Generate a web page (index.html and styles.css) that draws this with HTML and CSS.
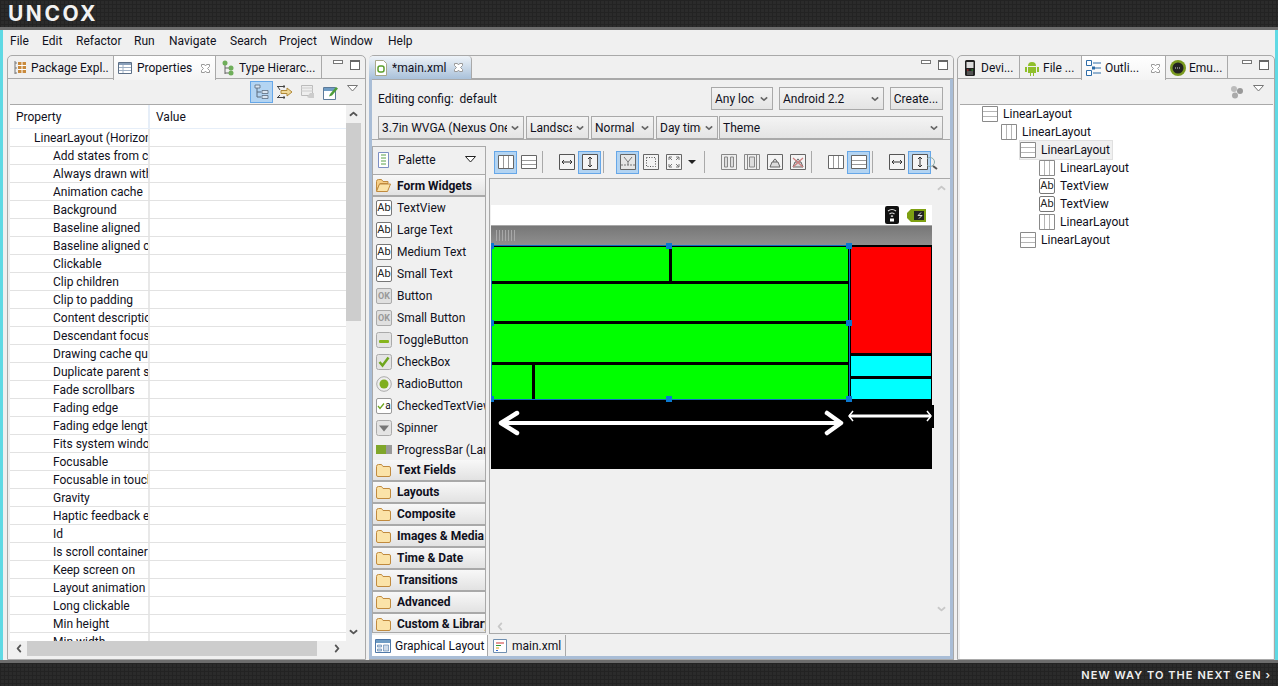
FILE: index.html
```html
<!DOCTYPE html>
<html lang="en">
  <head>
    <meta charset="UTF-8" />
    <title>Eclipse - main.xml</title>
    <link rel="stylesheet" href="styles.css">
  </head>
  <body>
    <svg class="defs" width="0" height="0">
      <symbol id="chev" viewBox="0 0 10 6"><path d="M1 1l4 3.5L9 1" fill="none" stroke="currentColor" stroke-width="2"/></symbol>
      <symbol id="chevup" viewBox="0 0 10 6"><path d="M1 5l4-3.5L9 5" fill="none" stroke="currentColor" stroke-width="2"/></symbol>
      <symbol id="chevl" viewBox="0 0 6 10"><path d="M5 1L1.5 5 5 9" fill="none" stroke="currentColor" stroke-width="2"/></symbol>
      <symbol id="chevr" viewBox="0 0 6 10"><path d="M1 1l3.5 4L1 9" fill="none" stroke="currentColor" stroke-width="2"/></symbol>
      <symbol id="close" viewBox="0 0 11 11"><path d="M1.5 1.5l3 0 1 1.5 1-1.5 3 0 0 2-2 2 2 2 0 2-3 0-1-1.5-1 1.5-3 0 0-2 2-2-2-2z" fill="#fff" stroke="#9a9a9a"/></symbol>
      <symbol id="vert" viewBox="0 0 16 14"><path d="M.5.5h15v13H.5z" fill="#fff" stroke="#666"/><path d="M5.5 1v12M10.5 1v12" stroke="#999"/></symbol>
      <symbol id="horz" viewBox="0 0 16 14"><path d="M.5.5h15v13H.5z" fill="#fff" stroke="#666"/><path d="M1 5.5h14M1 9.5h14" stroke="#999"/></symbol>
      <symbol id="tvert" viewBox="0 0 16 16"><path d="M.5.5h15v15H.5z" fill="#fff" stroke="#8a8a8a"/><path d="M5.5 1v14M10.5 1v14" stroke="#b5b5b5"/></symbol>
      <symbol id="thorz" viewBox="0 0 16 16"><path d="M.5.5h15v15H.5z" fill="#fff" stroke="#8a8a8a"/><path d="M1 5.5h14M1 10.5h14" stroke="#b5b5b5"/></symbol>
      <symbol id="fitw" viewBox="0 0 16 16"><path d="M.5.5h15v15H.5z" fill="#f4f4f4" stroke="#555"/><path d="M3 8h10M5 6L3 8l2 2M11 6l2 2-2 2" fill="none" stroke="#333"/></symbol>
      <symbol id="fith" viewBox="0 0 16 16"><path d="M.5.5h15v15H.5z" fill="#f4f4f4" stroke="#555"/><path d="M8 3v10M6 5l2-2 2 2M6 11l2 2 2-2" fill="none" stroke="#333"/></symbol>
      <symbol id="folder" viewBox="0 0 15 13"><path d="M.5 2.500q0-2 2-2h3l1.500 2h6q1.500 0 1.500 1.500v7q0 1.500-1.500 1.500h-11q-1.500 0-1.500-1.500z" fill="#fbe3a8" stroke="#c08a3e"/></symbol>
    </svg>

    <div class="topbar"><span class="logo">UNCOX</span></div>

    <div class="workbench">
      <nav class="menubar">
        <span class="m-file">File</span>
        <span class="m-edit">Edit</span>
        <span class="m-refactor">Refactor</span>
        <span class="m-run">Run</span>
        <span class="m-navigate">Navigate</span>
        <span class="m-search">Search</span>
        <span class="m-project">Project</span>
        <span class="m-window">Window</span>
        <span>Help</span>
      </nav>

      <div class="panels">
        <!-- left: properties -->
        <section class="panel panel-left">
          <div class="tabbar">
            <div class="tab tab-package">
              <svg class="ico" viewBox="0 0 16 16"><path d="M3 1v13M3 3h2M3 8h2M3 13h2" stroke="#777" fill="none"/><path d="M6 2h8v11H6z" fill="#c98a3c"/><path d="M6 5.500h8M6 9.500h8M10 2v11" stroke="#fff"/></svg>
              <span class="tab-text">Package Expl...</span>
            </div>
            <div class="tab tab-active tab-props">
              <svg class="ico" viewBox="0 0 16 16"><path d="M.5 2.500h13v11H.5z" fill="#fff" stroke="#5c6f87"/><path d="M1 3h12v2H1z" fill="#8aa0ba"/><path d="M1 7.500h12M1 10.500h12M5 5v8" stroke="#9fb0c4"/></svg>
              <span class="tab-text">Properties</span>
              <svg class="close" viewBox="0 0 11 11"><use href="#close"/></svg>
            </div>
            <div class="tab tab-type">
              <svg class="ico" viewBox="0 0 16 16"><path d="M5 3v11M5 8h5M5 13h5" stroke="#666" fill="none"/><circle cx="5" cy="3" r="2.500" fill="#6fae5a"/><circle cx="11" cy="8" r="2.500" fill="#6fae5a"/><circle cx="11" cy="13" r="2.500" fill="#6fae5a"/></svg>
              <span class="tab-text">Type Hierarc...</span>
            </div>
            <div class="view-btns"><span class="vmin"></span><span class="vmax"></span></div>
          </div>
          <div class="viewbar">
            <span class="tool tool-on">
              <svg viewBox="0 0 16 16" width="16" height="16"><path d="M3 3v10h4M3 8h4" fill="none" stroke="#5a6b7c"/><path d="M1 1h5v3H1zM8 6.500h6v3H8zM8 11.500h6v3H8z" fill="#dbe6f2" stroke="#5a6b7c" stroke-width=".8"/></svg>
            </span>
            <span class="tool">
              <svg viewBox="0 0 16 16" width="16" height="16"><path d="M0 2.500h8M0 13.500h8M7 1v3M7 12v3M3 6l-2-3M3 11l-2 2" stroke="#444" fill="none"/><path d="M4 6.500h6V4l5 4-5 4V9.500H4z" fill="#f0d999" stroke="#b0893a"/></svg>
            </span>
            <span class="tool">
              <svg viewBox="0 0 16 16" width="16" height="16"><path d="M1.500 1.500h11v10h-11z" fill="#eee" stroke="#bbb"/><path d="M1 4h12M1 7h12" stroke="#ccc"/><path d="M7 13l3-4h4v5H9z" fill="#ccc"/></svg>
            </span>
            <span class="tool">
              <svg viewBox="0 0 16 16" width="16" height="16"><path d="M.5 3.500h12v12H.5z" fill="#fff" stroke="#5c7a99"/><path d="M1 4h11v3H1z" fill="#6f9cc4"/><path d="M7 10l6-7 2 1.500-6 7-3 1z" fill="#4e9d3a"/></svg>
            </span>
            <svg class="view-menu" viewBox="0 0 11 7" width="11" height="7"><path d="M.5.500h10L5.500 6z" fill="#fff" stroke="#777"/></svg>
          </div>
          <div class="proptable">
            <div class="prop-body">
              <div class="prop-head"><div class="cell-k">Property</div><div class="cell-v">Value</div></div>
              <div class="prop-row prop-group"><div class="cell-k">LinearLayout (Horizontal)</div><div class="cell-v"></div></div>
              <div class="prop-row"><div class="cell-k">Add states from children</div><div class="cell-v"></div></div>
              <div class="prop-row"><div class="cell-k">Always drawn with cache</div><div class="cell-v"></div></div>
              <div class="prop-row"><div class="cell-k">Animation cache</div><div class="cell-v"></div></div>
              <div class="prop-row"><div class="cell-k">Background</div><div class="cell-v"></div></div>
              <div class="prop-row"><div class="cell-k">Baseline aligned</div><div class="cell-v"></div></div>
              <div class="prop-row"><div class="cell-k">Baseline aligned child</div><div class="cell-v"></div></div>
              <div class="prop-row"><div class="cell-k">Clickable</div><div class="cell-v"></div></div>
              <div class="prop-row"><div class="cell-k">Clip children</div><div class="cell-v"></div></div>
              <div class="prop-row"><div class="cell-k">Clip to padding</div><div class="cell-v"></div></div>
              <div class="prop-row"><div class="cell-k">Content description</div><div class="cell-v"></div></div>
              <div class="prop-row"><div class="cell-k">Descendant focusability</div><div class="cell-v"></div></div>
              <div class="prop-row"><div class="cell-k">Drawing cache quality</div><div class="cell-v"></div></div>
              <div class="prop-row"><div class="cell-k">Duplicate parent state</div><div class="cell-v"></div></div>
              <div class="prop-row"><div class="cell-k">Fade scrollbars</div><div class="cell-v"></div></div>
              <div class="prop-row"><div class="cell-k">Fading edge</div><div class="cell-v"></div></div>
              <div class="prop-row"><div class="cell-k">Fading edge length</div><div class="cell-v"></div></div>
              <div class="prop-row"><div class="cell-k">Fits system windows</div><div class="cell-v"></div></div>
              <div class="prop-row"><div class="cell-k">Focusable</div><div class="cell-v"></div></div>
              <div class="prop-row"><div class="cell-k">Focusable in touch mode</div><div class="cell-v"></div></div>
              <div class="prop-row"><div class="cell-k">Gravity</div><div class="cell-v"></div></div>
              <div class="prop-row"><div class="cell-k">Haptic feedback enabled</div><div class="cell-v"></div></div>
              <div class="prop-row"><div class="cell-k">Id</div><div class="cell-v"></div></div>
              <div class="prop-row"><div class="cell-k">Is scroll container</div><div class="cell-v"></div></div>
              <div class="prop-row"><div class="cell-k">Keep screen on</div><div class="cell-v"></div></div>
              <div class="prop-row"><div class="cell-k">Layout animation</div><div class="cell-v"></div></div>
              <div class="prop-row"><div class="cell-k">Long clickable</div><div class="cell-v"></div></div>
              <div class="prop-row"><div class="cell-k">Min height</div><div class="cell-v"></div></div>
              <div class="prop-row"><div class="cell-k">Min width</div><div class="cell-v"></div></div>
            </div>
            <div class="vscroll">
              <svg class="sb-chev" viewBox="0 0 10 6"><use href="#chevup"/></svg>
              <div class="vthumb"></div>
              <svg class="sb-chev sb-end" viewBox="0 0 10 6"><use href="#chev"/></svg>
            </div>
          </div>
          <div class="hscroll">
            <svg class="sb-chev-h" viewBox="0 0 6 10"><use href="#chevl"/></svg>
            <div class="hthumb"></div>
            <svg class="sb-chev-h" viewBox="0 0 6 10"><use href="#chevr"/></svg>
          </div>
        </section>

        <!-- center: layout editor -->
        <section class="panel panel-center">
          <div class="tabbar tabbar-editor">
            <div class="tab tab-editor">
              <svg class="ico" viewBox="0 0 16 16"><path d="M2.500.5h8l3 3v12h-11z" fill="#fff" stroke="#a8a88a"/><rect x="5" y="6" width="6" height="6" rx="2" fill="none" stroke="#5a9e2a" stroke-width="1.500"/></svg>
              <span class="tab-text">*main.xml</span>
              <svg class="close" viewBox="0 0 11 11"><use href="#close"/></svg>
            </div>
            <div class="view-btns"><span class="vmin"></span><span class="vmax"></span></div>
          </div>
          <div class="editor">
            <div class="config">
              <div class="config-row">
                <span class="config-label">Editing config:&nbsp; default</span>
                <div class="combo w-62">Any loc<svg class="combo-chev" viewBox="0 0 10 6"><use href="#chev"/></svg></div>
                <div class="combo w-105">Android 2.2<svg class="combo-chev" viewBox="0 0 10 6"><use href="#chev"/></svg></div>
                <div class="combo combo-btn w-53">Create...</div>
              </div>
              <div class="config-row config-row2">
                <div class="combo w-146"><span class="combo-text">3.7in WVGA (Nexus One)</span><svg class="combo-chev" viewBox="0 0 10 6"><use href="#chev"/></svg></div>
                <div class="combo w-63"><span class="combo-text">Landscape</span><svg class="combo-chev" viewBox="0 0 10 6"><use href="#chev"/></svg></div>
                <div class="combo w-63">Normal<svg class="combo-chev" viewBox="0 0 10 6"><use href="#chev"/></svg></div>
                <div class="combo w-62"><span class="combo-text">Day time</span><svg class="combo-chev" viewBox="0 0 10 6"><use href="#chev"/></svg></div>
                <div class="combo w-theme">Theme<svg class="combo-chev" viewBox="0 0 10 6"><use href="#chev"/></svg></div>
              </div>
            </div>

            <div class="design">
              <aside class="palette">
                <div class="palette-head">
                  <svg class="ico" viewBox="0 0 16 16"><path d="M2.500.5h10v15h-10z" fill="#fff" stroke="#7d8fc4"/><path d="M5 3h5M5 6h5M5 9h5M5 12h5" stroke="#5aa04a"/></svg>
                  <span>Palette</span>
                  <svg class="palette-menu" viewBox="0 0 11 7" width="11" height="7"><path d="M.5.500h10L5.500 6z" fill="#fff" stroke="#222"/></svg>
                </div>
                <div class="cat cat-open"><svg class="folder" viewBox="0 0 15 13"><path d="M.5 2.500q0-2 2-2h3l1.500 2h5v2H4L.5 12z" fill="#f6cf87" stroke="#c08a3e"/><path d="M3.500 5h11l-3 7.500H.5z" fill="#fbe3a8" stroke="#c08a3e"/></svg>Form Widgets</div>
                <div class="item"><span class="ab">Ab</span>TextView</div>
                <div class="item"><span class="ab">Ab</span>Large Text</div>
                <div class="item"><span class="ab">Ab</span>Medium Text</div>
                <div class="item"><span class="ab">Ab</span>Small Text</div>
                <div class="item"><span class="ok">OK</span>Button</div>
                <div class="item"><span class="ok">OK</span>Small Button</div>
                <div class="item"><svg class="ico" viewBox="0 0 16 16"><rect x=".5" y=".5" width="15" height="15" rx="2" fill="#e4e4e4" stroke="#aaa"/><rect x="3" y="8" width="10" height="3" rx="1" fill="#86b51c"/></svg>ToggleButton</div>
                <div class="item"><svg class="ico" viewBox="0 0 16 16"><rect x=".5" y=".5" width="15" height="15" rx="2" fill="#e4e4e4" stroke="#aaa"/><path d="M3.500 8l3 3.500 6-8" fill="none" stroke="#6ea61e" stroke-width="2.500"/></svg>CheckBox</div>
                <div class="item"><svg class="ico" viewBox="0 0 16 16"><circle cx="8" cy="8" r="7.300" fill="#eee" stroke="#aaa"/><circle cx="8" cy="8" r="4.500" fill="#7fae1d"/></svg>RadioButton</div>
                <div class="item"><span class="checked"><svg viewBox="0 0 8 8" width="8" height="8"><path d="M1 4l2 2.500L7 1.500" fill="none" stroke="#6ea61e" stroke-width="1.300"/></svg>a</span>CheckedTextView</div>
                <div class="item"><svg class="ico" viewBox="0 0 16 16"><rect x=".5" y=".5" width="15" height="15" rx="2" fill="#e4e4e4" stroke="#aaa"/><path d="M3 5.500h10L8 11.500z" fill="#777"/></svg>Spinner</div>
                <div class="item"><svg class="ico" viewBox="0 0 16 16"><rect x="0" y="3" width="16" height="9" fill="#999"/><rect x="0" y="3" width="10" height="9" fill="#7fa62a"/></svg>ProgressBar (Large)</div>
                <div class="cat cat-first"><svg class="folder" viewBox="0 0 15 13"><use href="#folder"/></svg>Text Fields</div>
                <div class="cat"><svg class="folder" viewBox="0 0 15 13"><use href="#folder"/></svg>Layouts</div>
                <div class="cat"><svg class="folder" viewBox="0 0 15 13"><use href="#folder"/></svg>Composite</div>
                <div class="cat"><svg class="folder" viewBox="0 0 15 13"><use href="#folder"/></svg>Images &amp; Media</div>
                <div class="cat"><svg class="folder" viewBox="0 0 15 13"><use href="#folder"/></svg>Time &amp; Date</div>
                <div class="cat"><svg class="folder" viewBox="0 0 15 13"><use href="#folder"/></svg>Transitions</div>
                <div class="cat"><svg class="folder" viewBox="0 0 15 13"><use href="#folder"/></svg>Advanced</div>
                <div class="cat"><svg class="folder" viewBox="0 0 15 13"><use href="#folder"/></svg>Custom &amp; Library</div>
              </aside>

              <div class="stage">
                <div class="stage-tools">
                  <span class="tbtn tbtn-on"><svg width="16" height="14"><use href="#vert"/></svg></span>
                  <span class="tbtn"><svg width="16" height="14"><use href="#horz"/></svg></span>
                  <span class="tsep"></span>
                  <span class="tbtn"><svg width="16" height="16"><use href="#fitw"/></svg></span>
                  <span class="tbtn tbtn-on"><svg width="16" height="16"><use href="#fith"/></svg></span>
                  <span class="tsep"></span>
                  <span class="tbtn tbtn-on"><svg width="16" height="16" viewBox="0 0 16 16"><path d="M.5.5h15v15H.5z" fill="#e6e6e6" stroke="#666"/><path d="M4 3l4 5 4-5M8 8v3" fill="none" stroke="#777"/><path d="M1 11h14" stroke="#777" stroke-dasharray="2 1"/></svg></span>
                  <span class="tbtn"><svg width="16" height="16" viewBox="0 0 16 16"><path d="M.5.5h15v15H.5z" fill="#f4f4f4" stroke="#666"/><path d="M3.500 3.500h9v9h-9z" fill="none" stroke="#555" stroke-dasharray="1 1.500"/></svg></span>
                  <span class="tbtn"><svg width="16" height="16" viewBox="0 0 16 16"><path d="M.5.5h15v15H.5z" fill="#f4f4f4" stroke="#666"/><path d="M3 3l3 3M13 3l-3 3M3 13l3-3M13 13l-3-3M3 3h3M3 3v3M13 3h-3M13 3v3M3 13h3M3 13v-3M13 13h-3M13 13v-3" stroke="#777" fill="none"/></svg></span>
                  <svg class="tdrop" viewBox="0 0 8 4" width="8" height="4"><path d="M0 0h8L4 4z" fill="#222"/></svg>
                  <span class="tsep"></span>
                  <span class="tbtn"><svg width="16" height="16" viewBox="0 0 16 16"><path d="M.5.5h15v15H.5z" fill="#eee" stroke="#888"/><path d="M3.500 3h3v10h-3zM9.500 3h3v10h-3z" fill="#ddd" stroke="#888"/></svg></span>
                  <span class="tbtn"><svg width="16" height="16" viewBox="0 0 16 16"><path d="M.5.5h15v15H.5z" fill="#eee" stroke="#888"/><path d="M3.500 0v16M12.500 0v16M5.500 3h5v10h-5z" fill="#ddd" stroke="#888"/></svg></span>
                  <span class="tbtn"><svg width="16" height="16" viewBox="0 0 16 16"><path d="M.5.5h15v15H.5z" fill="#f4f4f4" stroke="#666"/><path d="M3 13l2-5h6l2 5zM6 8q2-6 4 0" fill="#ddd" stroke="#666"/></svg></span>
                  <span class="tbtn"><svg width="16" height="16" viewBox="0 0 16 16"><path d="M.5.5h15v15H.5z" fill="#f4f4f4" stroke="#666"/><path d="M3 13l2-5h6l2 5zM6 8q2-6 4 0" fill="#ddd" stroke="#666"/><path d="M3 4l10 9M13 4L3 13" stroke="#d08080" stroke-width="1.200"/></svg></span>
                  <span class="tsep"></span>
                  <span class="tbtn"><svg width="16" height="14"><use href="#vert"/></svg></span>
                  <span class="tbtn tbtn-on"><svg width="16" height="14"><use href="#horz"/></svg></span>
                  <span class="tsep"></span>
                  <span class="tbtn"><svg width="16" height="16"><use href="#fitw"/></svg></span>
                  <span class="tbtn tbtn-on"><svg width="16" height="16"><use href="#fith"/></svg></span>
                  <svg class="zoom-glass" viewBox="0 0 11 14" width="11" height="14"><circle cx="3" cy="6" r="4.500" fill="none" stroke="#8aa"/><path d="M6 10l4 3" stroke="#555" stroke-width="2"/></svg>
                </div>

                <div class="stage-body">
                  <div class="stage-view">
                    <div class="device">
                      <div class="status"><svg width="14" height="18" viewBox="0 0 14 18"><rect width="14" height="18" rx="2" fill="#111"/><path d="M3 5q4-3 8 0M4.500 8q2.500-2 5 0M6 10.500q1-1 2 0" fill="none" stroke="#ddd" stroke-width="1.200"/><rect x="5" y="12.500" width="4" height="3" fill="#fff"/></svg><svg width="19" height="13" viewBox="0 0 19 13"><path d="M4 0h15v13H4L0 9V4z" fill="#7ea012"/><rect x="7" y="2" width="10" height="9" fill="#222"/><path d="M14 3.500l-3 3h4l-3 3" fill="none" stroke="#ddd"/></svg></div>
                      <div class="titlebar"><span class="notif"></span></div>
                      <div class="screen">
                        <div class="col-main">
                          <div class="gbar gbar-1"><div class="g g-a"></div><div class="g"></div></div>
                          <div class="gbar gbar-2"><div class="g"></div></div>
                          <div class="gbar gbar-3"><div class="g"></div></div>
                          <div class="gbar gbar-4"><div class="g g-b"></div><div class="g"></div></div>
                        </div>
                        <div class="col-side">
                          <div class="red"></div>
                          <div class="cyan"></div>
                          <div class="cyan"></div>
                        </div>
                        <div class="selection">
                          <span class="h h-tl"></span><span class="h h-tc"></span><span class="h h-tr"></span>
                          <span class="h h-ml"></span><span class="h h-mr"></span>
                          <span class="h h-bl"></span><span class="h h-bc"></span><span class="h h-br"></span>
                        </div>
                        <svg class="arrows" width="443" height="40" viewBox="0 0 443 40">
                          <rect x="441" y="7" width="2" height="23" fill="#000"/>
                          <path d="M10 25h340" stroke="#fff" stroke-width="4"/>
                          <path d="M26 15L10 25l16 10M336 15l14 10-14 10" fill="none" stroke="#fff" stroke-width="4.500" stroke-linejoin="round" stroke-linecap="round"/>
                          <path d="M358 18h82" stroke="#fff" stroke-width="3"/>
                          <path d="M362 13l-4 5 4 5M436 13l4 5-4 5" fill="none" stroke="#fff" stroke-width="1.500"/>
                        </svg>
                      </div>
                    </div>
                    <div class="stage-vs">
                      <svg class="sb-chev sb-light" viewBox="0 0 10 6"><use href="#chevup"/></svg>
                      <svg class="sb-chev sb-light" viewBox="0 0 10 6"><use href="#chev"/></svg>
                    </div>
                  </div>
                  <div class="stage-hs"><svg class="sb-chev-h sb-light" viewBox="0 0 6 10"><use href="#chevl"/></svg></div>
                </div>
              </div>
            </div>

            <div class="editor-tabs">
              <div class="etab etab-on">
                <svg class="ico" viewBox="0 0 16 16"><path d="M.5 1.500h15v13H.5z" fill="#fff" stroke="#4f78a8"/><path d="M1 2h14v3H1z" fill="#6f9cc4"/><path d="M2.500 7h4v2h-4zM2.500 11h4v2h-4zM8.500 7h5v6h-5z" fill="#cfdcea" stroke="#4f78a8" stroke-width=".6"/></svg>
                Graphical Layout
              </div>
              <div class="etab">
                <svg class="ico" viewBox="0 0 16 16"><path d="M1.500 1.500h13v13h-13z" fill="#fff" stroke="#6f8fb0"/><path d="M4 5h8" stroke="#c33"/><path d="M4 7.500h5" stroke="#393"/><path d="M4 10h3" stroke="#d90"/><path d="M4 12.500h2" stroke="#36c"/></svg>
                main.xml
              </div>
            </div>
          </div>
        </section>

        <!-- right: outline -->
        <section class="panel panel-right">
          <div class="tabbar">
            <div class="tab tab-62">
              <svg class="ico" viewBox="0 0 16 16"><rect x="3" y="0" width="10" height="16" rx="1.500" fill="#222"/><rect x="4.500" y="2" width="7" height="6" fill="#ddd"/><path d="M5 10h1.500" stroke="#e33"/><path d="M9.500 10H11" stroke="#3b3"/><path d="M5 12h6M5 14h6" stroke="#888"/></svg>
              <span class="tab-text">Devi...</span>
            </div>
            <div class="tab tab-62">
              <svg class="ico" viewBox="0 0 16 16"><path d="M4 6a4 4 0 0 1 8 0zM4 7h8v6h-2v3H9v-3H7v3H6v-3H4zM1 7h2v5H1zM13 7h2v5h-2z" fill="#8fbf2a"/></svg>
              <span class="tab-text">File ...</span>
            </div>
            <div class="tab tab-active tab-84">
              <svg class="ico" viewBox="0 0 16 16"><path d="M.5.5h5v5h-5zM.5 10.500h5v5h-5z" fill="#fff" stroke="#2d6ca8"/><path d="M7 3h8M7 13h8M9 8h6" stroke="#2d6ca8"/><path d="M6 6.500h3v3H6z" fill="#2d6ca8"/></svg>
              <span class="tab-text">Outli...</span>
              <svg class="close" viewBox="0 0 11 11"><use href="#close"/></svg>
            </div>
            <div class="tab tab-62">
              <svg class="ico" viewBox="0 0 16 16"><circle cx="8" cy="8" r="8" fill="#7a9a20"/><circle cx="8" cy="8" r="5.500" fill="#222"/><path d="M5 8h6" stroke="#ddd" stroke-dasharray="1 1"/></svg>
              <span class="tab-text">Emu...</span>
            </div>
            <div class="view-btns"><span class="vmin"></span><span class="vmax"></span></div>
          </div>
          <div class="viewbar viewbar-right">
            <svg class="collapse-ico" width="14" height="14" viewBox="0 0 14 14"><circle cx="4" cy="4" r="3" fill="#bbb"/><circle cx="10" cy="6" r="3" fill="#999"/><circle cx="5" cy="10.500" r="3" fill="#aaa"/></svg>
            <svg class="view-menu" viewBox="0 0 11 7" width="11" height="7"><path d="M.5.500h10L5.500 6z" fill="#fff" stroke="#777"/></svg>
          </div>
          <div class="tree">
            <div class="node lvl-0"><svg width="16" height="16"><use href="#thorz"/></svg>LinearLayout</div>
            <div class="node lvl-1"><svg width="16" height="16"><use href="#tvert"/></svg>LinearLayout</div>
            <div class="node lvl-2 node-sel"><svg width="16" height="16"><use href="#thorz"/></svg>LinearLayout</div>
            <div class="node lvl-3"><svg width="16" height="16"><use href="#tvert"/></svg>LinearLayout</div>
            <div class="node lvl-3"><span class="ab">Ab</span>TextView</div>
            <div class="node lvl-3"><span class="ab">Ab</span>TextView</div>
            <div class="node lvl-3"><svg width="16" height="16"><use href="#tvert"/></svg>LinearLayout</div>
            <div class="node lvl-2"><svg width="16" height="16"><use href="#thorz"/></svg>LinearLayout</div>
          </div>
        </section>
      </div>
    </div>

    <div class="bottombar"><span class="slogan">NEW WAY TO THE NEXT GEN ›</span></div>
  </body>
</html>
```

FILE: styles.css
```css
* {
  box-sizing: border-box;
}

html,
body {
  margin: 0;
  height: 686px;
  overflow: hidden;
}

body {
  width: 1278px;
  display: flex;
  flex-direction: column;
  font-family: "Roboto", "Noto Sans", sans-serif;
  font-size: 12px;
  line-height: 16px;
  color: #101020;
  background: #2a2a2a;
}

.defs {
  position: absolute;
}

svg {
  flex: none;
  display: block;
}

/* dark bars */
.topbar,
.bottombar {
  background-color: #2b2b2b;
  background-image: linear-gradient(#232323 1px, transparent 1px), linear-gradient(90deg, #232323 1px, transparent 1px);
  background-size: 4px 4px;
  display: flex;
  align-items: center;
}

.topbar {
  height: 30px;
  border-bottom: 3px solid #6c6c6c;
  padding-left: 8px;
}

.logo {
  font-family: "Inter", sans-serif;
  font-size: 21px;
  font-weight: 700;
  letter-spacing: 2.5px;
  color: #f2f2f2;
}

.bottombar {
  height: 26px;
  border-top: 3px solid #6c6c6c;
  justify-content: flex-end;
  padding-right: 7px;
}

.slogan {
  font-family: "Inter", sans-serif;
  font-size: 11px;
  font-weight: 600;
  letter-spacing: 1.05px;
  color: #f0f0f0;
}

/* workbench */
.workbench {
  height: 630px;
  background: #f0f0f0;
  border-left: 3px solid #5fd9e4;
  border-right: 3px solid #5fd9e4;
  padding: 0 0 0 4px;
  display: flex;
  flex-direction: column;
}

.menubar {
  height: 25px;
  padding: 0 0 3px 3px;
  display: flex;
  align-items: center;
  white-space: nowrap;
}

.menubar span {
  display: block;
}

.m-file { width: 32px; }
.m-edit { width: 34px; }
.m-refactor { width: 58px; }
.m-run { width: 35px; }
.m-navigate { width: 61px; }
.m-search { width: 49px; }
.m-project { width: 51px; }
.m-window { width: 58px; }

.panels {
  height: 605px;
  display: flex;
  gap: 3px;
}

.panel {
  display: flex;
  flex-direction: column;
  border: 1px solid #a9a9a9;
  border-radius: 5px 5px 0 0;
  background: #f0f0f0;
  overflow: hidden;
}

.panel-left { width: 359px; }
.panel-center { width: 585px; border-left: none; }
.panel-right { width: 318px; }

/* tabs */
.tabbar {
  height: 23px;
  flex: none;
  display: flex;
  border-bottom: 1px solid #a9a9a9;
}

.tab {
  display: flex;
  align-items: center;
  gap: 3px;
  padding: 0 4px;
  border-right: 1px solid #a9a9a9;
  white-space: nowrap;
  overflow: hidden;
  height: 23px;
  flex: none;
}

.tab-active {
  background: linear-gradient(#ffffff, #f4f4f4);
  border-left: 1px solid #a9a9a9;
  height: 24px;
  margin-left: -1px;
}

.tab-text {
  flex: 1;
  overflow: hidden;
}

.tab-package { width: 106px; }
.tab-props { width: 103px; }
.tab-type { width: 106px; }
.tab-62 { width: 62px; }
.tab-84 { width: 85px; }

.ico {
  width: 16px;
  height: 16px;
}

.close {
  width: 11px;
  height: 11px;
}

.view-btns {
  margin-left: auto;
  display: flex;
  align-items: center;
  gap: 7px;
  padding: 0 5px 4px 0;
}

.vmin {
  width: 10px;
  height: 4px;
  border: 1px solid #777;
  background: #fff;
  margin-bottom: 6px;
}

.vmax {
  width: 10px;
  height: 10px;
  border: 1px solid #666;
  border-top-width: 2px;
  background: #fff;
}

.viewbar {
  height: 26px;
  flex: none;
  display: flex;
  align-items: flex-start;
  justify-content: flex-end;
  padding: 2px 4px 0 0;
  border-bottom: 1px solid #a9a9a9;
  margin: 0 3px 0 2px;
}

.tool {
  width: 23px;
  height: 22px;
  display: flex;
  align-items: center;
  justify-content: center;
}

.tool-on {
  background: #b3d4f2;
  border: 1px solid #66a7e8;
}

.view-menu {
  margin: 4px 0 0 5px;
}

/* property table */
.proptable {
  flex: 1;
  min-height: 0;
  display: flex;
  margin: 0 3px 0 2px;
  background: #fff;
  overflow: hidden;
}

.prop-body {
  width: 336px;
  overflow: hidden;
}

.prop-head {
  height: 24px;
  display: flex;
  line-height: 25px;
  border-bottom: 1px solid #e6eef8;
}

.prop-head .cell-k {
  padding-left: 6px;
}

.prop-row {
  height: 18px;
  display: flex;
  line-height: 18px;
  border-bottom: 1px solid #e2e2e2;
}

.cell-k {
  width: 140px;
  flex: none;
  padding-left: 43px;
  white-space: nowrap;
  overflow: hidden;
  border-right: 2px solid #e8e8e8;
}

.prop-group .cell-k {
  padding-left: 24px;
}

.cell-v {
  flex: 1;
  padding-left: 6px;
}

.prop-head .cell-k {
  border-right-color: #e6eef8;
}

.vscroll {
  width: 16px;
  display: flex;
  flex-direction: column;
  align-items: flex-start;
  background: #f0f0f0;
}

.vthumb {
  width: 15px;
  height: 198px;
  margin-top: 6px;
  background: #cdcdcd;
}

.sb-chev {
  width: 9px;
  height: 6px;
  color: #555;
  margin: 6px 0 0 3px;
  flex: none;
}

.sb-end {
  margin-top: auto;
  margin-bottom: 6px;
}

.sb-chev-h {
  width: 6px;
  height: 9px;
  color: #555;
  flex: none;
}

.sb-light {
  color: #c8c8c8;
}

.hscroll {
  height: 15px;
  flex: none;
  margin: 0 3px 3px 2px;
  display: flex;
  align-items: center;
  padding: 0 0 0 6px;
  background: #f0f0f0;
}

.hthumb {
  width: 290px;
  height: 15px;
  margin: 0 17px 0 5px;
  background: #cdcdcd;
}

/* editor */
.tabbar-editor {
  background: #f0f0f0;
}

.tab-editor {
  width: 103px;
  height: 23px;
  background: linear-gradient(#eef3f8, #a9c1da);
  border-right: 1px solid #a9a9a9;
  border-radius: 4px 4px 0 0;
  padding: 0 7px 0 4px;
  gap: 3px;
}

.editor {
  flex: 1;
  min-height: 0;
  background: #f0f0f0;
  border: 3px solid #a9bdd6;
  border-top: none;
  display: flex;
  flex-direction: column;
}

.config {
  height: 61px;
  flex: none;
  border-top: 1px solid #a9a9a9;
  padding: 7px 7px 0 6px;
  border-bottom: 1px solid #a9a9a9;
}

.config-row {
  display: flex;
  gap: 6px;
  align-items: center;
}

.config-row2 {
  gap: 2px;
  margin-top: 6px;
}

.config-label {
  margin-right: auto;
}

.combo {
  height: 23px;
  flex: none;
  display: flex;
  align-items: center;
  justify-content: space-between;
  gap: 4px;
  padding: 0 4px 0 3px;
  border: 1px solid #a9a9a9;
  background: linear-gradient(#f4f4f4, #e4e4e4);
  white-space: nowrap;
}

.combo-btn {
  justify-content: center;
}

.combo-text {
  flex: 1;
  overflow: hidden;
}

.combo-chev {
  width: 8px;
  height: 6px;
  color: #666;
}

.w-53 { width: 53px; }
.w-62 { width: 62px; }
.w-63 { width: 63px; }
.w-105 { width: 105px; }
.w-146 { width: 146px; }
.w-theme { width: 224px; margin-left: -1px; }

.design {
  flex: 1;
  min-height: 0;
  display: flex;
  gap: 3px;
  padding-top: 6px;
}

/* palette */
.palette {
  width: 114px;
  flex: none;
  border: 1px solid #a9a9a9;
  margin-bottom: 1px;
  white-space: nowrap;
  overflow: hidden;
}

.palette-head {
  height: 28px;
  display: flex;
  align-items: center;
  gap: 6px;
  padding: 0 9px 2px 3px;
  border-bottom: 1px solid #a9a9a9;
}

.palette-menu {
  margin-left: auto;
}

.cat {
  height: 22px;
  display: flex;
  align-items: center;
  gap: 6px;
  padding-left: 3px;
  font-weight: 700;
  background: linear-gradient(#f8f8f8, #e2e2e2);
  border-bottom: 2px solid #a9a9a9;
  overflow: hidden;
}

.cat-open {
  padding-top: 1px;
}

.cat-first {
  margin-top: -1px;
}

.folder {
  width: 15px;
  height: 13px;
}

.item {
  height: 22px;
  display: flex;
  align-items: center;
  gap: 5px;
  padding-left: 3px;
  overflow: hidden;
}

.ab,
.ok {
  width: 16px;
  height: 16px;
  flex: none;
  border-radius: 2px;
  text-align: center;
  font-size: 11px;
  line-height: 14px;
}

.ab {
  border: 1px solid #777;
  background: #fff;
  color: #222;
}

.ok {
  border: 1px solid #aaa;
  background: #e0e0e0;
  color: #999;
  font-size: 9px;
  font-weight: 700;
}

.checked {
  width: 16px;
  height: 16px;
  flex: none;
  display: flex;
  align-items: center;
  justify-content: center;
  border: 1px solid #999;
  border-radius: 2px;
  background: #fff;
  font-size: 10px;
  line-height: 12px;
}

/* stage */
.stage {
  flex: 1;
  min-width: 0;
  display: flex;
  flex-direction: column;
}

.stage-tools {
  height: 33px;
  flex: none;
  display: flex;
  align-items: center;
  padding: 0 0 0 5px;
  border-bottom: 1px solid #a9a9a9;
  position: relative;
}

.tbtn {
  width: 23px;
  height: 23px;
  flex: none;
  display: flex;
  align-items: center;
  justify-content: center;
}

.tbtn-on {
  background: #b3d4f2;
  border: 1px solid #66a7e8;
}

.tsep {
  width: 1px;
  height: 22px;
  flex: none;
  background: #a9a9a9;
  margin: 0 12px 0 2px;
}

.tdrop {
  margin: 0 6px 0 3px;
}

.zoom-glass {
  position: absolute;
  left: 438px;
  top: 10px;
}

.stage-body {
  flex: 1;
  min-height: 0;
  display: flex;
  flex-direction: column;
  border-left: 1px solid #a9a9a9;
  border-bottom: 1px solid #a9a9a9;
}

.stage-view {
  flex: 1;
  min-height: 0;
  display: flex;
  padding-left: 1px;
}

.device {
  width: 441px;
  padding-top: 26px;
  flex: none;
}

.status {
  height: 20px;
  background: #fff;
  display: flex;
  align-items: center;
  justify-content: flex-end;
  gap: 8px;
  padding-right: 6px;
}

.titlebar {
  height: 20px;
  background: linear-gradient(#777, #8f8f8f);
  border-top: 1px solid #a8a8a8;
  padding: 4px 0 0 5px;
}

.notif {
  display: block;
  width: 20px;
  height: 11px;
  background: repeating-linear-gradient(90deg, #a8a8a8 0 1px, transparent 1px 3px);
}

.screen {
  height: 224px;
  background: #000;
  display: flex;
  gap: 2px;
  padding: 2px 1px 70px 1px;
  position: relative;
}

.col-main {
  width: 357px;
  display: flex;
  flex-direction: column;
  gap: 3px;
}

.gbar {
  display: flex;
  gap: 3px;
}

.gbar-1 { height: 34px; }
.gbar-2 { height: 37px; }
.gbar-3 { height: 38px; }
.gbar-4 { height: 34px; }

.g {
  flex: 1;
  background: #00ff00;
}

.g-a {
  flex: none;
  width: 177px;
}

.g-b {
  flex: none;
  width: 40px;
}

.col-side {
  width: 80px;
  display: flex;
  flex-direction: column;
  gap: 3px;
  margin-left: 1px;
}

.red {
  height: 106px;
  background: #ff0000;
}

.cyan {
  height: 20px;
  background: #00ffff;
}

.selection {
  position: absolute;
  left: 0;
  top: 0;
  width: 359px;
  height: 155px;
  border: 1px solid #0a6fc2;
}

.h {
  position: absolute;
  width: 6px;
  height: 6px;
  background: #0a78d0;
}

.h-tl { left: -1px; top: -3px; width: 3px; }
.h-tc { left: 174px; top: -3px; }
.h-tr { right: -3px; top: -3px; }
.h-ml { left: -1px; top: 74px; width: 3px; }
.h-mr { right: -3px; top: 74px; }
.h-bl { left: -1px; bottom: -3px; width: 3px; }
.h-bc { left: 174px; bottom: -3px; }
.h-br { right: -3px; bottom: -3px; }

.arrows {
  position: absolute;
  left: 0;
  top: 153px;
}

.stage-vs {
  width: 16px;
  flex: none;
  margin-left: 1px;
  display: flex;
  flex-direction: column;
  justify-content: space-between;
  align-items: center;
  padding: 6px 0 7px;
}

.stage-vs .sb-chev {
  margin: 0;
}

.stage-hs {
  height: 14px;
  flex: none;
  display: flex;
  align-items: center;
  padding-left: 7px;
}

.editor-tabs {
  height: 21px;
  flex: none;
  display: flex;
  margin-top: 1px;
}

.etab {
  display: flex;
  align-items: center;
  gap: 4px;
  padding: 0 4px;
  border-right: 1px solid #a9a9a9;
  white-space: nowrap;
}

.etab-on {
  width: 116px;
  padding-left: 3px;
  background: #fff;
}

/* outline */
.viewbar-right {
  align-items: center;
  margin: 0 1px 0 2px;
  padding: 0 9px 0 0;
}

.viewbar-right .view-menu {
  align-self: flex-start;
  margin: 6px 0 0 9px;
}

.collapse-ico {
  margin-top: 1px;
}

.tree {
  flex: 1;
  background: #fff;
  margin: 0 1px 0 2px;
  white-space: nowrap;
}

.node {
  height: 18px;
  display: flex;
  align-items: center;
  gap: 5px;
  width: fit-content;
}

.lvl-0 { margin-left: 22px; }
.lvl-1 { margin-left: 41px; }
.lvl-2 { margin-left: 60px; }
.lvl-3 { margin-left: 79px; }

.node-sel {
  background: #f0f0f0;
  outline: 1px solid #e0e0e0;
  padding-right: 2px;
}
```
